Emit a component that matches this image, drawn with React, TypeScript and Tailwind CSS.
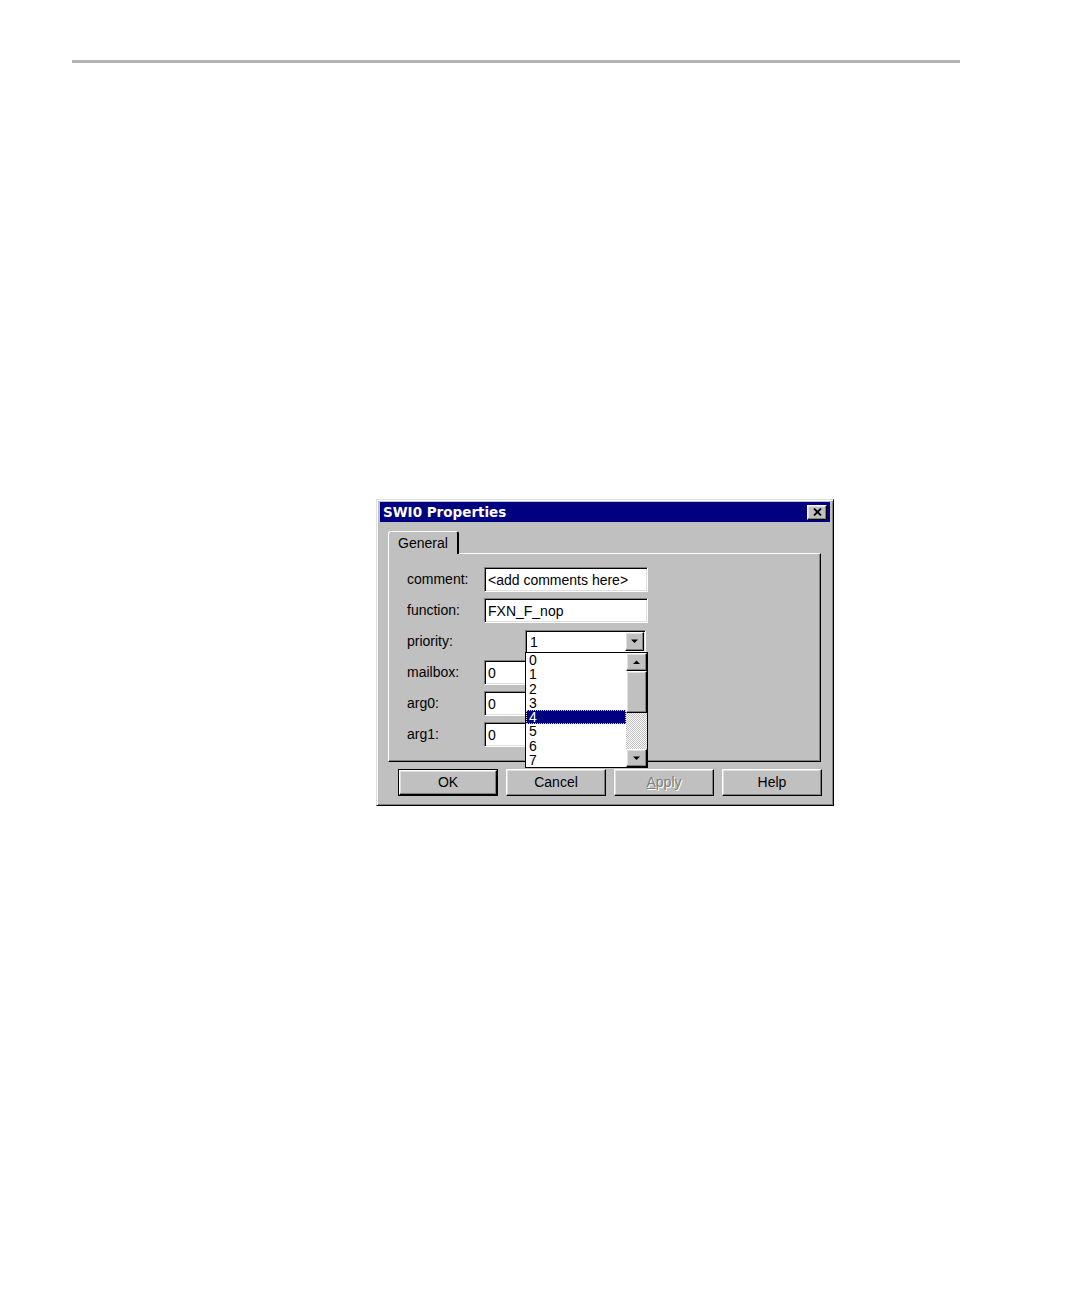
import React from "react";

const raised =
    "border border-t-white border-l-white border-r-black border-b-black shadow-[inset_-1px_-1px_0_#808080,inset_1px_1px_0_#dfdfdf]";
const sunken =
    "border border-t-[#808080] border-l-[#808080] border-r-white border-b-white shadow-[inset_1px_1px_0_#000,inset_-1px_-1px_0_#dfdfdf]";

const Arrow = ({ up = false }: { up?: boolean }) => (
    <svg width="8" height="5" viewBox="0 0 8 5">
        <polygon points={up ? "0,4 7,4 3.5,0.5" : "0,0.5 7,0.5 3.5,4"} fill="#000" />
    </svg>
);

const fields = [
    { label: "comment:", value: "<add comments here>", wide: true },
    { label: "function:", value: "FXN_F_nop", wide: true },
    { label: "priority:", value: "1", combo: true },
    { label: "mailbox:", value: "0" },
    { label: "arg0:", value: "0" },
    { label: "arg1:", value: "0" },
];

const listItems = ["0", "1", "2", "3", "4", "5", "6", "7"];

const Field = ({ f }: { f: (typeof fields)[number] }) => {
    if (f.combo) {
        return (
            <div className={`ml-[41px] w-[121px] h-[24px] bg-white flex items-center ${sunken}`}>
                <span className="flex-1 pl-[4px] leading-none">{f.value}</span>
                <div className={`w-[19px] h-[19px] mr-[1px] bg-[#c0c0c0] flex items-center justify-center ${raised}`}>
                    <Arrow />
                </div>
            </div>
        );
    }
    return (
        <div className={`${f.wide ? "w-[164px]" : "w-[90px]"} h-[25px] bg-white flex items-center pl-[3px] ${sunken}`}>
            <span className="leading-none">{f.value}</span>
        </div>
    );
};

export default function App() {
    return (
        <div className="w-[1080px] h-[1299px] bg-white overflow-hidden font-['Liberation_Sans',Arial,sans-serif] text-[14px] text-black">
            <div className="ml-[72px] mt-[60px] w-[888px] h-[3px] bg-[#b3b3b3]" />

            <div className="ml-[376px] mt-[436px] w-[458px] h-[307px] bg-[#c0c0c0] pt-[2px] px-[3px] border border-t-[#dfdfdf] border-l-[#dfdfdf] border-r-black border-b-black shadow-[inset_1px_1px_0_#fff,inset_-1px_-1px_0_#808080]">
                {/* title bar */}
                <div className="h-[20px] bg-[#000080] flex items-center justify-between pl-[3px] pr-[3px]">
                    <span className="font-['DejaVu_Sans',sans-serif] font-bold text-[13.5px] text-white">
                        SWI0 Properties
                    </span>
                    <div className={`w-[20px] h-[15px] bg-[#c0c0c0] flex items-center justify-center ${raised}`}>
                        <svg width="9" height="8" viewBox="0 0 9 8">
                            <path d="M1 0.5 L8 7.5 M8 0.5 L1 7.5" stroke="#000" strokeWidth="1.8" />
                        </svg>
                    </div>
                </div>

                {/* tab */}
                <div className="ml-[8px] mt-[9px] flex">
                    <div className="w-[71px] h-[23px] bg-[#c0c0c0] border-t border-l border-t-white border-l-white border-r-2 border-r-black rounded-t-[3px] flex items-center justify-center relative z-10 -mb-[1px]">
                        General
                    </div>
                </div>

                {/* panel */}
                <div className="ml-[8px] w-[433px] h-[209px] relative border border-t-white border-l-white border-r-black border-b-black shadow-[inset_-1px_-1px_0_#808080]">
                    <div className="pt-[13px] pl-[18px] flex flex-col gap-[6px]">
                        {fields.map((f) => (
                            <div key={f.label} className="flex items-center h-[25px]">
                                <span className="w-[77px]">{f.label}</span>
                                <Field f={f} />
                            </div>
                        ))}
                    </div>

                    {/* open priority list */}
                    <div className="absolute left-[136px] top-[98px] w-[123px] h-[116px] bg-white border border-black flex z-20">
                        <div className="flex-1 flex flex-col">
                            {listItems.map((n) => (
                                <div
                                    key={n}
                                    className={`h-[14.25px] pl-[3px] text-[14px] leading-[14px] ${
                                        n === "4"
                                            ? "bg-[#000080] text-white outline outline-1 outline-dotted outline-[#d8d890] -outline-offset-1"
                                            : ""
                                    }`}
                                >
                                    {n}
                                </div>
                            ))}
                        </div>
                        <div className="w-[21px] flex flex-col">
                            <div className={`h-[18px] bg-[#c0c0c0] flex items-center justify-center ${raised}`}>
                                <Arrow up />
                            </div>
                            <div className={`h-[42px] bg-[#c0c0c0] ${raised}`} />
                            <div className="flex-1 bg-[repeating-conic-gradient(#c0c0c0_0_25%,#ffffff_0_50%)] bg-[length:2px_2px]" />
                            <div className={`h-[18px] bg-[#c0c0c0] flex items-center justify-center ${raised}`}>
                                <Arrow />
                            </div>
                        </div>
                    </div>
                </div>

                {/* buttons */}
                <div className="ml-[18px] mt-[7px] flex gap-[8px]">
                    <div className="w-[100px] h-[27px] border border-black">
                        <div className={`w-full h-full flex items-center justify-center ${raised}`}>OK</div>
                    </div>
                    <div className={`w-[100px] h-[27px] flex items-center justify-center ${raised}`}>Cancel</div>
                    <div
                        className={`w-[100px] h-[27px] flex items-center justify-center text-[#808080] [text-shadow:1px_1px_0_#fff] ${raised}`}
                    >
                        <span>
                            <span className="underline">A</span>pply
                        </span>
                    </div>
                    <div className={`w-[100px] h-[27px] flex items-center justify-center ${raised}`}>Help</div>
                </div>
            </div>
        </div>
    );
}
